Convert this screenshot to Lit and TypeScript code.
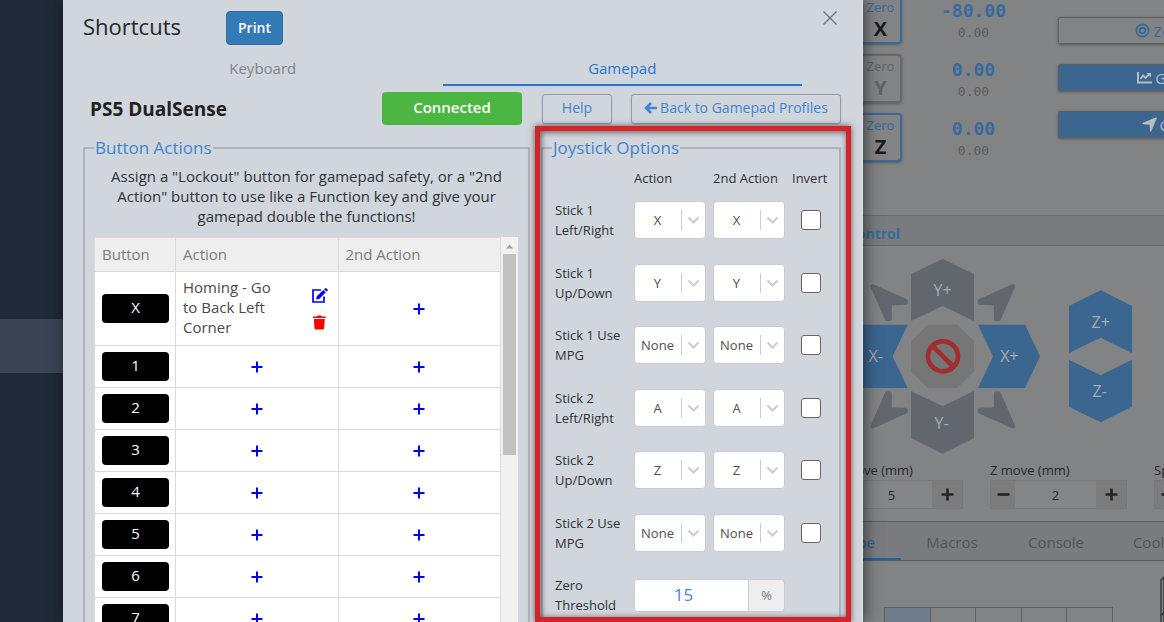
import { LitElement, html, svg, css } from "lit";
import { customElement } from "lit/decorators.js";

const plus = html`<svg class="plus" viewBox="0 0 12 12" aria-hidden="true"><path d="M6 0.5V11.5M0.5 6H11.5" /></svg>`;

interface Shortcut {
  key: string;
  action?: string;
}

const shortcuts: Shortcut[] = [
  { key: "X", action: "Homing - Go to Back Left Corner" },
  ...["1", "2", "3", "4", "5", "6", "7"].map((key) => ({ key })),
];

const sticks = [
  { label: "Stick 1 Left/Right", value: "X" },
  { label: "Stick 1 Up/Down", value: "Y" },
  { label: "Stick 1 Use MPG", value: "None" },
  { label: "Stick 2 Left/Right", value: "A" },
  { label: "Stick 2 Up/Down", value: "Z" },
  { label: "Stick 2 Use MPG", value: "None" },
];

const axes = ["None", "X", "Y", "Z", "A"];

@customElement("shortcuts-dialog")
export class ShortcutsDialog extends LitElement {
  static styles = css`
    :host {
      display: block;
      position: relative;
      padding: 0 21px 0 20px;
      background: #d1d5dc;
      border-right: 1px solid #dfe2e6;
      box-shadow: 2px 0 14px rgba(0, 0, 0, 0.55);
      color: #2e3238;
      font: 14px/20px "Open Sans", "Noto Sans", sans-serif;
      overflow: hidden;
    }
    *, *::before { box-sizing: border-box; }
    button, input, select { font: inherit; margin: 0; }
    button { cursor: pointer; }
    .header { display: flex; align-items: flex-start; height: 54px; padding-top: 11px; }
    .title { margin: 0; width: 143px; font-size: 22px; line-height: 30px; font-weight: 400; color: #24272b; }
    .print { width: 57px; height: 34px; padding: 0; border: 1px solid #2e6da4; border-radius: 4px; background: #337ab7; color: #fff; font-weight: 600; }
    .close { margin-left: auto; margin-right: 2px; width: 18px; height: 14px; padding: 0; border: 0; background: none; line-height: 0; }
    .close svg { width: 16px; height: 14px; stroke: #6d7178; stroke-width: 1.3; }
    .tabs { display: flex; margin-right: 39px; height: 32px; }
    .tab { flex: 1; padding: 0 0 2px; font-size: 15px; border: 0; border-bottom: 2px solid transparent; background: none; color: #80848f; }
    .tab.on { color: #1f78d1; border-color: #1f78d1; }
    .profile { display: flex; align-items: center; height: 45px; padding-left: 7px; margin-bottom: 7px; }
    .name { margin: 0 auto 0 0; font-size: 19px; line-height: 24px; font-weight: 700; color: #1e2124; }
    .status { width: 140px; height: 33px; border-radius: 4px; background: #4cb643; color: #fff; font-size: 15px; font-weight: 600; line-height: 31px; text-align: center; }
    .outline { height: 30px; padding: 0 0 2px; border: 1px solid #959bb0; border-radius: 3px; background: none; color: #3f86cf; box-shadow: 0 1px 2px rgba(0, 0, 0, 0.15); display: flex; align-items: center; justify-content: center; gap: 3px; }
    .outline svg { width: 13px; height: 12px; fill: none; stroke: currentColor; stroke-width: 2.6; }
    .help { width: 70px; margin-left: 20px; }
    .back { width: 210px; margin-left: 19px; }
    .panels { display: grid; grid-template-columns: minmax(0, 1fr) 300px; gap: 11px; height: 520px; }
    fieldset { min-width: 0; margin: 0; padding: 0 9px; border: 2px solid #aeb2ba; }
    legend { padding: 0 1px; font-size: 17px; line-height: 20px; color: #3f86cf; }
    .hint { margin: 8px 10px 11px; text-align: center; font-size: 15px; }
    .scroller { display: grid; grid-template-columns: minmax(0, 1fr) 17px; margin-right: 1px; }
    table { width: 100%; table-layout: fixed; border-collapse: collapse; background: #fff; }
    th, td { border: 1px solid #d9dadb; padding: 6px 7px; height: 42px; }
    th { height: 34px; padding: 0 7px 2px; background: #eee; color: #7d7d7d; font-weight: 400; text-align: left; font-size: 15px; }
    td { text-align: center; }
    td .cell { display: flex; align-items: center; justify-content: space-between; text-align: left; font-size: 15px; color: #4a4a4a; padding: 0 3px 0 0; height: 61px; }
    .cell span { width: 95px; padding-bottom: 4px; }
    .col-key { width: 81px; }
    .key { display: block; width: 67px; height: 29px; padding: 0 0 2px; border: 0; border-radius: 4px; background: #000; color: #fff; font-size: 15px; line-height: 27px; }
    .icon { display: block; padding: 0; border: 0; background: none; line-height: 0; }
    .add { margin: 0 auto; }
    .plus { width: 12px; height: 12px; stroke: #00f; stroke-width: 2; }
    .tools { display: grid; gap: 12px; justify-items: center; }
    .tools svg { width: 16px; height: 15px; display: block; }
    .bar { background: #f1f1f1; display: flex; flex-direction: column; align-items: center; gap: 5px; padding-top: 7px; }
    .bar svg { width: 7px; height: 5px; fill: #a0a0a0; }
    .thumb { width: 13px; height: 201px; background: #c1c1c1; }
    .joystick { font-size: 13px; }
    .row { display: grid; grid-template-columns: 72px 72px 72px 37px; column-gap: 7px; padding-left: 3px; align-items: center; }
    .row > :first-child { width: 70px; }
    .heads { margin: 10px 0 12px; }
    .heads span { white-space: nowrap; }
    .rows { display: flex; flex-direction: column; justify-content: space-between; height: 415px; }
    .pick { position: relative; display: block; }
    .pick select { display: block; width: 72px; height: 38px; padding: 0 25px 0 0; border: 1px solid #c9ccd1; border-radius: 4px; background: #fff; color: #4f4f4f; text-align: center; text-align-last: center; appearance: none; }
    .pick svg { position: absolute; right: 6px; top: 9px; width: 20px; height: 20px; fill: none; stroke: #ccc; pointer-events: none; }
    input[type="checkbox"] { appearance: none; justify-self: center; width: 20px; height: 20px; background: #fff; border: 1px solid #666; border-radius: 3px; }
    .threshold { grid-column: 2 / 4; display: flex; height: 33px; border: 1px solid #c9ccd1; border-radius: 4px; overflow: hidden; background: #eee; }
    .threshold input { min-width: 0; flex: 1; padding: 0 16px 0 0; border: 0; background: #fff; border-right: 1px solid #c9ccd1; color: #3f8ad8; font-size: 17px; text-align: center; }
    .threshold span { width: 35px; line-height: 31px; text-align: center; color: #777; }
    .marker { position: absolute; top: 126px; right: 11px; width: 316px; bottom: 0; border: 5px solid #d62329; box-shadow: 0 0 6px rgba(0, 0, 0, 0.6), inset 1px 1px 6px rgba(0, 0, 0, 0.6); pointer-events: none; }
  `;

  private pick(name: string, value: string) {
    return html`<span class="pick">
      <select aria-label=${name}>${axes.map((a) => html`<option ?selected=${a === value}>${a}</option>`)}</select>
      <svg viewBox="0 0 20 20" aria-hidden="true"><path d="M1.5 0V20" /><path d="M8.5 7.5L13.5 12.5L18.5 7.5" stroke-width="2" /></svg>
    </span>`;
  }

  render() {
    return html`
      <header class="header">
        <h1 class="title">Shortcuts</h1>
        <button class="print">Print</button>
        <button class="close" aria-label="Close"><svg viewBox="0 0 16 14"><path d="M1.5 0.5L14.5 13.5M14.5 0.5L1.5 13.5" /></svg></button>
      </header>
      <nav class="tabs">
        <button class="tab">Keyboard</button>
        <button class="tab on">Gamepad</button>
      </nav>
      <div class="profile">
        <h2 class="name">PS5 DualSense</h2>
        <div class="status">Connected</div>
        <button class="outline help">Help</button>
        <button class="outline back"><svg viewBox="0 0 13 12" aria-hidden="true"><path d="M7 1L2 6L7 11M2 6H13" /></svg>Back to Gamepad Profiles</button>
      </div>
      <div class="panels">
        <fieldset>
          <legend>Button Actions</legend>
          <p class="hint">Assign a "Lockout" button for gamepad safety, or a "2nd Action" button to use like a Function key and give your gamepad double the functions!</p>
          <div class="scroller">
            <table>
              <thead><tr><th class="col-key">Button</th><th>Action</th><th>2nd Action</th></tr></thead>
              <tbody>
                ${shortcuts.map((s) => html`<tr>
                  <td><button class="key">${s.key}</button></td>
                  <td>${s.action
                    ? html`<div class="cell"><span>${s.action}</span>
                        <div class="tools">
                          <button class="icon" aria-label="Edit"><svg viewBox="0 0 16 15"><path d="M9 2H1V14H12V8.5" fill="none" stroke="#00f" stroke-width="1.7" /><path d="M4.2 11.5L4.8 8.3L11.3 2L13.8 4.3L7.3 10.9ZM12.1 1.2L13.2 0.2Q13.8 -0.2 14.5 0.4L15.6 1.5Q16.2 2.1 15.6 2.7L14.6 3.6Z" fill="#00f" /></svg></button>
                          <button class="icon" aria-label="Delete"><svg viewBox="0 0 16 15"><path d="M1 1.5H4.8L5.6 0.4H9L9.8 1.5H13.6V3H1ZM1.8 4H12.8L12.1 13.2Q12 14.4 10.9 14.4H3.7Q2.6 14.4 2.5 13.2Z" fill="#f00" /></svg></button>
                        </div></div>`
                    : html`<button class="icon add" aria-label="Add action">${plus}</button>`}</td>
                  <td><button class="icon add" aria-label="Add second action">${plus}</button></td>
                </tr>`)}
              </tbody>
            </table>
            <div class="bar"><svg viewBox="0 0 7 5"><path d="M0 4.5L3.5 0.5L7 4.5Z" /></svg><div class="thumb"></div></div>
          </div>
        </fieldset>
        <fieldset class="joystick">
          <legend>Joystick Options</legend>
          <div class="row heads"><span></span><span>Action</span><span>2nd Action</span><span>Invert</span></div>
          <div class="rows">
            ${sticks.map((s, i) => html`<div class="row">
              <label for="invert-${i}">${s.label}</label>
              ${this.pick(`${s.label} action`, s.value)}
              ${this.pick(`${s.label} second action`, s.value)}
              <input type="checkbox" id="invert-${i}" />
            </div>`)}
            <div class="row">
              <label for="threshold">Zero Threshold</label>
              <div class="threshold"><input id="threshold" value="15" /><span>%</span></div>
            </div>
          </div>
        </fieldset>
      </div>
      <div class="marker"></div>
    `;
  }
}

@customElement("machine-workspace")
export class MachineWorkspace extends LitElement {
  static styles = css`
    :host { display: block; overflow: hidden; background: #828385; color: #26282b; font: 13px/20px "Open Sans", "Noto Sans", sans-serif; }
    *, *::before { box-sizing: border-box; }
    button, input { font: inherit; margin: 0; }
    .content { width: 520px; margin-left: -66px; }
    .location { display: flex; height: 216px; border-bottom: 1px solid #686a6d; }
    .axes { display: grid; grid-template-rows: repeat(3, 49px); row-gap: 10px; align-content: start; margin: -5px 0 0 60px; width: 170px; }
    .axis { display: grid; grid-template-columns: 45px 1fr; }
    .zero { display: flex; flex-direction: column; align-items: center; padding: 0 0 0 2px; border: 2px solid #386a9c; border-radius: 4px; background: none; color: #386a9c; box-shadow: 0 1px 3px rgba(0, 0, 0, 0.3); }
    .zero span { line-height: 18px; margin-top: 1px; }
    .zero b { font-size: 20px; line-height: 26px; font-weight: 700; color: #1a1b1d; }
    .zero.off { border-color: #66686c; color: #5f6268; }
    .zero.off b { color: #5f6268; }
    .pos { text-align: center; padding-left: 18px; font-family: "DejaVu Sans Mono", monospace; color: #5a5c60; line-height: 21px; padding-top: 5px; }
    .pos b { display: block; font-size: 18px; line-height: 22px; color: #386a9c; }
    .moves { display: grid; gap: 20px; align-content: start; padding-top: 17px; margin-left: 31px; }
    .move { display: flex; align-items: center; justify-content: center; gap: 3px; width: 226px; height: 27px; padding: 0; border: 1px solid #5e6063; border-radius: 2px; background: #3b668f; color: #b9bcbf; font-size: 15px; box-shadow: 0 1px 3px rgba(0, 0, 0, 0.35); }
    .move.plain { background: none; color: #386a9c; }
    .move svg { width: 15px; height: 15px; }
    .heading { margin: 0; height: 30px; padding: 4px 0 0 26px; background: #7a7b7e; border-bottom: 1px solid #636569; color: #386a9c; font-size: 14px; line-height: 28px; font-weight: 700; }
    .jog { display: block; width: 314px; height: 204px; margin: 9px 0 1px 53px; }
    .jog text { font-size: 48px; fill: #a9acaf; text-anchor: middle; }
    .steps { display: flex; gap: 27px; margin: 0 0 12px 29px; }
    .step { display: block; width: 137px; flex: none; }
    .stepper { display: flex; height: 29px; border: 1px solid #77787a; }
    .stepper button { width: 30px; padding: 0; border: 0; background: #7c7c7d; line-height: 0; }
    .stepper button:first-child { width: 24px; }
    .stepper input { flex: 1; min-width: 0; padding: 0; border: 0; background: #848587; color: #26282b; text-align: center; }
    .stepper svg { width: 13px; height: 13px; stroke: #242528; stroke-width: 2.6; }
    .tabs { display: flex; height: 40px; border-top: 1px solid #595d63; border-bottom: 1px solid #595d63; background: #7a7b7e; }
    .tab { width: 104px; padding: 2px 2px 0 0; border: 0; background: none; color: #50545b; font-size: 15px; }
    .tab.on { color: #245f9e; padding: 4px 0 0 10px; border-bottom: 2px solid #245f9e; }
    .probe { display: flex; padding: 15px 0 0 87px; }
    .cells { display: grid; grid-template-columns: repeat(5, 1fr); width: 229px; height: 60px; margin-top: 31px; border: 1px solid #5d6063; border-right: 0; }
    .cells i { border-right: 1px solid #5d6063; }
    .cells i:first-child { background: #6f7d8c; }
    .tool { width: 30px; height: 60px; margin-left: 47px; fill: none; stroke: #2b2c2e; stroke-width: 1.2; }
  `;

  private stepper(label: string, id: string, value: string) {
    return html`<div class="step">
      <label for=${id}>${label}</label>
      <div class="stepper">
        <button aria-label="Decrease"><svg viewBox="0 0 13 13"><path d="M0.5 6.5H12.5" /></svg></button>
        <input id=${id} value=${value} />
        <button aria-label="Increase"><svg viewBox="0 0 13 13"><path d="M0.5 6.5H12.5M6.5 0.5V12.5" /></svg></button>
      </div>
    </div>`;
  }

  render() {
    const wing = svg`<path d="M68 138L168 183L167 187L119 189V236H111Z" />`;
    return html`<div class="content">
      <section class="location">
        <div class="axes">
          ${[["X", "-80.00"], ["Y", "0.00"], ["Z", "0.00"]].map(([axis, value]) => html`<div class="axis">
            <button class="zero ${axis === "Y" ? "off" : ""}"><span>Zero</span><b>${axis}</b></button>
            <div class="pos"><b>${value}</b>0.00</div>
          </div>`)}
        </div>
        <div class="moves">
          <button class="move plain"><svg viewBox="0 0 15 15" fill="none" stroke="currentColor"><circle cx="7.5" cy="7.5" r="6.2" stroke-width="1.7" /><circle cx="7.5" cy="7.5" r="2.8" stroke-width="1.9" /></svg>Zero All</button>
          <button class="move"><svg viewBox="0 0 15 15"><path d="M1 2V12.5H15" fill="none" stroke="currentColor" stroke-width="2" /><path d="M3.5 9L6 5.5L8.5 8L12 4.5" fill="none" stroke="currentColor" stroke-width="1.8" /><path d="M9.5 3H14V7.5Z" fill="currentColor" /></svg>Go XY0</button>
          <button class="move"><svg viewBox="0 0 15 15"><path d="M14.4 0.6Q15 0 14.8 1.2L9.4 14Q8.4 15.4 8 13.8L7.6 7.8L1.2 7.2Q-0.4 6.8 1 5.8L13.6 0.4Z" fill="currentColor" /></svg>Go Z0</button>
        </div>
      </section>
      <h2 class="heading">Jog Control</h2>
      <svg class="jog" viewBox="0 44 942 612">
        <g fill="#62676e">
          <path d="M183 102L278 55L372 102V242L278 197L183 242Z" />
          <path d="M183 452L278 498L372 452V593L278 640L183 593Z" />
        </g>
        <g fill="#62676e" stroke="#62676e" stroke-width="13" stroke-linejoin="round">
          ${wing}
          <g transform="matrix(-1 0 0 1 557 0)">${wing}</g>
          <g transform="matrix(1 0 0 -1 0 696)">${wing}</g>
          <g transform="matrix(-1 0 0 -1 557 696)">${wing}</g>
        </g>
        <g fill="#3b668f">
          <path d="M384 253H525L570 348L525 443H384L429 348Z" />
          <path d="M173 253H32L-13 348L32 443H173L128 348Z" />
          <path d="M657 197L752 150L846 197V338L752 292L657 338Z" />
          <path d="M657 358L752 405L846 358V499L752 546L657 499Z" />
        </g>
        <path d="M233 253H322L372 303V393L322 443H233L183 393V303Z" fill="#757675" />
        <g fill="none" stroke="#a02e30" stroke-width="14"><circle cx="279" cy="348" r="45" /><path d="M247 316L311 380" /></g>
        <text x="278" y="167">Y+</text><text x="275" y="567">Y-</text><text x="77" y="365">X-</text>
        <text x="478" y="365">X+</text><text x="752" y="262">Z+</text><text x="749" y="471">Z-</text>
      </svg>
      <div class="steps">
        ${this.stepper("XY move (mm)", "xy-move", "5")}
        ${this.stepper("Z move (mm)", "z-move", "2")}
        ${this.stepper("Speed (mm/min)", "speed", "3000")}
      </div>
      <nav class="tabs">
        <button class="tab on">Probe</button><button class="tab">Macros</button>
        <button class="tab">Console</button><button class="tab">Coolant</button>
      </nav>
      <div class="probe">
        <div class="cells"><i></i><i></i><i></i><i></i><i></i></div>
        <svg class="tool" viewBox="0 0 30 60"><path d="M30 1H4L1 4V60M4 36L1 40M4 1V60" /></svg>
      </div>
    </div>`;
  }
}

@customElement("app-root")
export class AppRoot extends LitElement {
  static styles = css`
    :host { display: grid; grid-template-columns: 63px minmax(0, 1fr) 301px; height: 100vh; overflow: hidden; }
    .side { background: #1f2937; padding-top: 319px; }
    .current { height: 54px; background: #3a4454; }
    .dialog { z-index: 1; }
  `;

  render() {
    return html`
      <nav class="side"><div class="current"></div></nav>
      <shortcuts-dialog class="dialog"></shortcuts-dialog>
      <machine-workspace></machine-workspace>
    `;
  }
}
